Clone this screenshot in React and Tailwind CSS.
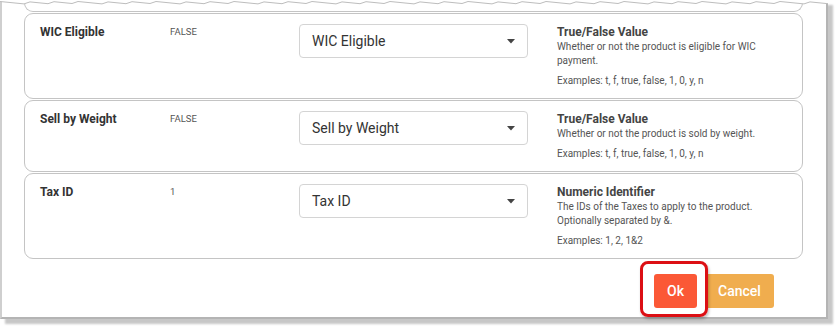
import React from 'react'

const rows = [
  {
    label: 'WIC Eligible',
    value: 'FALSE',
    select: 'WIC Eligible',
    title: 'True/False Value',
    desc: ['Whether or not the product is eligible for WIC', 'payment.'],
    examples: 'Examples: t, f, true, false, 1, 0, y, n',
  },
  {
    label: 'Sell by Weight',
    value: 'FALSE',
    select: 'Sell by Weight',
    title: 'True/False Value',
    desc: ['Whether or not the product is sold by weight.'],
    examples: 'Examples: t, f, true, false, 1, 0, y, n',
  },
  {
    label: 'Tax ID',
    value: '1',
    select: 'Tax ID',
    title: 'Numeric Identifier',
    desc: ['The IDs of the Taxes to apply to the product.', 'Optionally separated by &.'],
    examples: 'Examples: 1, 2, 1&2',
  },
]

// torn top edge of the screenshot
const tornPoints = (() => {
  const pts = []
  for (let x = 0; x <= 830; x += 6) {
    const y = 1.5 + ((x * 7) % 13) / 5
    pts.push(`${x},${y.toFixed(1)}`)
  }
  return pts.join(' ')
})()

function MappingRow({ row }) {
  return (
    <div className="flex rounded-[9px] border border-[#c4c4c4] bg-white pl-[15px] pt-[10px] pb-[10px]">
      <div className="w-[130px] text-[12px] font-bold leading-[16px] text-[#333]">{row.label}</div>
      <div className="w-[129px] pt-[1px] text-[9.5px] leading-[14px] text-[#555]">{row.value}</div>
      <div className="flex h-[34px] w-[229px] items-center justify-between rounded-[4px] border border-[#d4d4d4] pl-[12px] pr-[12px]">
        <span className="text-[14px] text-[#333]">{row.select}</span>
        <svg width="8" height="5" viewBox="0 0 8 5" className="mt-[1px]">
          <path d="M0 0 L8 0 L4 4.5 Z" fill="#444" />
        </svg>
      </div>
      <div className="ml-[29px] flex flex-col">
        <div className="text-[12px] font-bold leading-[16px] text-[#444]">{row.title}</div>
        <div className="text-[10px] leading-[14px] text-[#555]">
          {row.desc.map((d, i) => (
            <div key={i}>{d}</div>
          ))}
        </div>
        <div className="mt-[6px] text-[10px] leading-[14px] text-[#555]">{row.examples}</div>
      </div>
    </div>
  )
}

export default function App() {
  return (
    <div className="h-[331px] w-[837px] overflow-hidden bg-white" style={{ fontFamily: 'Roboto, "Liberation Sans", sans-serif' }}>
      <div className="relative h-[319px] w-[828px] border-x-2 border-b-2 border-l-[#cfcfcf] border-r-[#b4b4b4] border-b-[#b4b4b4] bg-white shadow-[5px_5px_2px_rgba(0,0,0,0.22)]">
        <svg className="absolute left-[-2px] top-0" width="832" height="8" viewBox="0 0 832 8">
          <polygon points={`0,0 ${tornPoints} 832,2 832,0`} fill="#fff" />
          <polyline points={tornPoints} fill="none" stroke="#bdbdbd" strokeWidth="1" />
        </svg>

        <div className="pl-[22px] pr-[23px]">
          <div className="h-[12px] rounded-b-[9px] border-x border-b border-[#c4c4c4]" />
          <div className="mt-[1px] flex flex-col gap-[1px]">
            {rows.map((r) => (
              <MappingRow key={r.label} row={r} />
            ))}
          </div>

          <div className="mt-[15px] flex justify-end gap-[8px] pr-[29px]">
            <div className="relative">
              <button className="h-[34px] w-[43px] rounded-[3px] bg-[#fb5836] text-[14px] font-medium text-white">Ok</button>
              <div className="pointer-events-none absolute left-[-14px] right-[-11px] top-[-13px] bottom-[-9px] rounded-[8px] border-[3px] border-[#dc0f14] shadow-[1px_2px_3px_rgba(0,0,0,0.25)]" />
            </div>
            <button className="h-[34px] w-[69px] rounded-[3px] bg-[#f0ad4e] text-[14px] font-medium text-white">Cancel</button>
          </div>
        </div>
      </div>
    </div>
  )
}
